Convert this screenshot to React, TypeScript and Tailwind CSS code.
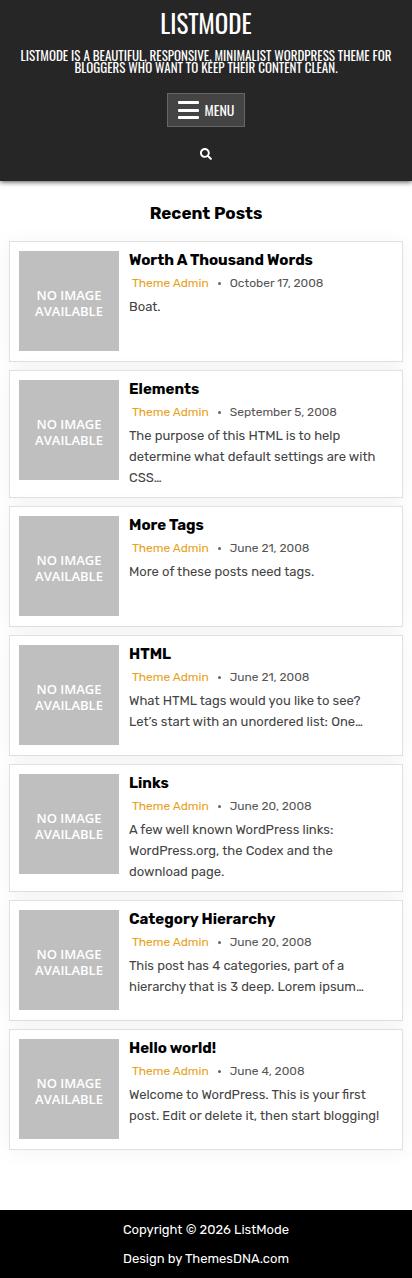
import React from "react";
import { FaSearch } from "react-icons/fa";

type Post = {
  title: string;
  date: string;
  excerpt: string;
};

const POSTS: Post[] = [
  { title: "Worth A Thousand Words", date: "October 17, 2008", excerpt: "Boat." },
  {
    title: "Elements",
    date: "September 5, 2008",
    excerpt: "The purpose of this HTML is to help determine what default settings are with CSS…",
  },
  { title: "More Tags", date: "June 21, 2008", excerpt: "More of these posts need tags." },
  {
    title: "HTML",
    date: "June 21, 2008",
    excerpt: "What HTML tags would you like to see? Let’s start with an unordered list: One…",
  },
  {
    title: "Links",
    date: "June 20, 2008",
    excerpt: "A few well known WordPress links: WordPress.org, the Codex and the download page.",
  },
  {
    title: "Category Hierarchy",
    date: "June 20, 2008",
    excerpt: "This post has 4 categories, part of a hierarchy that is 3 deep. Lorem ipsum…",
  },
  {
    title: "Hello world!",
    date: "June 4, 2008",
    excerpt: "Welcome to WordPress. This is your first post. Edit or delete it, then start blogging!",
  },
];

function Header() {
  return (
    <header className="flex flex-col items-center bg-[#262626] px-2 pt-2 pb-[13px] text-center font-['Oswald','Liberation_Sans_Narrow',sans-serif] text-white uppercase shadow-[0_1px_5px_rgba(0,0,0,0.7)]">
      <h1 className="text-[25px] leading-[30px]">
        <a href="#home">ListMode</a>
      </h1>
      <p className="mt-[11px] text-[13px] leading-3">
        ListMode is a beautiful, responsive, minimalist WordPress theme for bloggers who want to keep their content clean.
      </p>
      <button
        type="button"
        className="mt-5 flex h-[34px] items-center gap-1.5 border border-[#666] bg-[#444] px-2.5 text-sm uppercase"
      >
        <svg className="h-[18px] w-[21px]" viewBox="0 0 21 18" fill="currentColor" aria-hidden="true">
          <rect width="21" height="3" rx="1" />
          <rect y="8" width="21" height="3" rx="1" />
          <rect y="15" width="21" height="3" rx="1" />
        </svg>
        Menu
      </button>
      <button type="button" aria-label="Search" className="mt-[13px] p-2">
        <FaSearch className="h-3 w-3" />
      </button>
    </header>
  );
}

function PostCard({ title, date, excerpt }: Post) {
  return (
    <article className="flex min-h-[121px] items-start gap-2.5 border border-[#e0e0e0] bg-white p-[9px] shadow-[0_2px_20px_rgba(0,0,0,0.05)]">
      <a
        href="#post"
        className="flex h-[100px] w-[100px] shrink-0 items-center justify-center bg-[#bfbfbf] pt-1 text-center font-['Open_Sans',sans-serif] text-[13px] leading-4 font-semibold text-white"
      >
        NO IMAGE
        <br />
        AVAILABLE
      </a>
      <div className="min-w-0 pr-2">
        <h3 className="text-[15px] leading-[18px] font-bold text-black">
          <a href="#post">{title}</a>
        </h3>
        <div className="mt-[5px] flex items-center pl-[3px] text-xs leading-[18px] text-[#555]">
          <a href="#author" className="text-[#e6a117]">
            Theme Admin
          </a>
          <span className="mx-[9px] h-[3px] w-[3px] rounded-full bg-[#666]" />
          <span>{date}</span>
        </div>
        <p className="mt-1 text-[13px] leading-[21px] text-[#444]">{excerpt}</p>
      </div>
    </article>
  );
}

export default function App() {
  return (
    <div className="bg-white font-['Rubik','Inter',sans-serif]">
      <Header />
      <main className="px-[9px] pt-[22px] pb-[60px]">
        <h2 className="text-center text-[17px] leading-5 font-bold text-black">Recent Posts</h2>
        <div className="mt-[18px] flex flex-col gap-2">
          {POSTS.map((post) => (
            <PostCard key={post.title} {...post} />
          ))}
        </div>
      </main>
      <footer className="bg-black px-2 pt-[5px] pb-[5px] text-center text-[13px] leading-[29px] text-white">
        <p>Copyright © 2026 ListMode</p>
        <p>
          <a href="#themesdna">Design by ThemesDNA.com</a>
        </p>
      </footer>
    </div>
  );
}
